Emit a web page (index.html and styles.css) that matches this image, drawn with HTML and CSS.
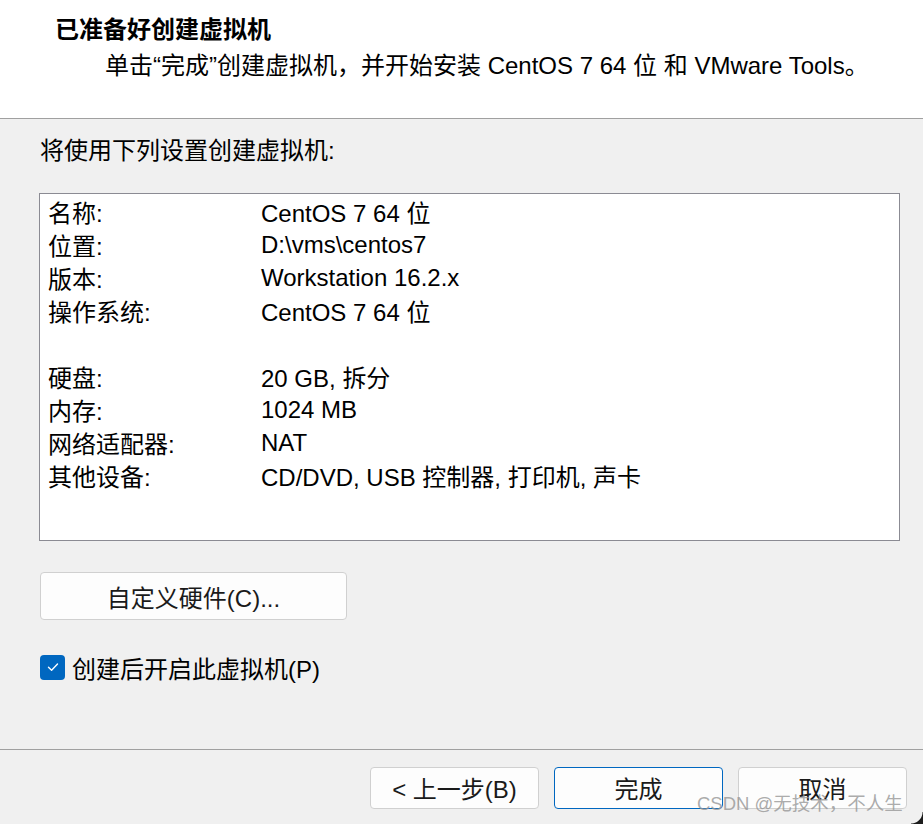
FILE: index.html
```html
<!DOCTYPE html>
<html lang="zh-CN">
<head>
<meta charset="UTF-8" />
<title>新建虚拟机向导</title>
<link rel="stylesheet" href="styles.css">
</head>
<body>
<div class="wizard">
  <div class="head">
    <h1>已准备好创建虚拟机</h1>
    <p>单击“完成”创建虚拟机，并开始安装 CentOS 7 64 位 和 VMware Tools。</p>
  </div>

  <div class="content">
    <div class="intro">将使用下列设置创建虚拟机:</div>

    <div class="summary">
      <div class="row"><span class="key">名称:</span><span>CentOS 7 64 位</span></div>
      <div class="row"><span class="key">位置:</span><span>D:\vms\centos7</span></div>
      <div class="row"><span class="key">版本:</span><span>Workstation 16.2.x</span></div>
      <div class="row"><span class="key">操作系统:</span><span>CentOS 7 64 位</span></div>
      <div class="row"></div>
      <div class="row"><span class="key">硬盘:</span><span>20 GB, 拆分</span></div>
      <div class="row"><span class="key">内存:</span><span>1024 MB</span></div>
      <div class="row"><span class="key">网络适配器:</span><span>NAT</span></div>
      <div class="row"><span class="key">其他设备:</span><span>CD/DVD, USB 控制器, 打印机, 声卡</span></div>
    </div>

    <button class="btn custom" type="button">自定义硬件(C)...</button>

    <label class="check">
      <span class="box">
        <svg width="14" height="14" viewBox="0 0 14 14"><path d="M2.5 7.2 L5.6 10.2 L11.5 4" fill="none" stroke="#fff" stroke-width="1.4" stroke-linecap="round" stroke-linejoin="round"/></svg>
      </span>
      创建后开启此虚拟机(P)
    </label>
  </div>

  <div class="foot">
    <button class="btn" type="button">&lt; 上一步(B)</button>
    <button class="btn primary" type="button">完成</button>
    <button class="btn" type="button">取消</button>
    <span class="mark">CSDN @无技术，不人生</span>
  </div>
  <div class="corner"></div>
</div>
</body>
</html>
```

FILE: styles.css
```css
/* 向导窗口 */
body {
  margin: 0;
  background: #f0f0f0;
  font-family: "Liberation Sans", "Noto Sans CJK SC", sans-serif;
  color: #000;
}
.wizard {
  width: 923px;
  height: 824px;
  display: flex;
  flex-direction: column;
  background: #f0f0f0;
  position: relative;
  overflow: hidden;
}
.head {
  background: #fff;
  height: 119px;
  border-bottom: 1px solid #a0a0a0;
  padding: 14px 0 0 55px;
  box-sizing: border-box;
}
.head h1 {
  margin: 0;
  font-size: 24px;
  font-weight: 700;
  line-height: 32px;
}
.head p {
  margin: 4px 0 0 50px;
  font-size: 24px;
  line-height: 32px;
}
.content {
  flex: 1;
  padding: 16px 0 0 40px;
}
.intro {
  font-size: 24px;
  line-height: 32px;
}
.summary {
  margin: 26px 0 0 -1px;
  width: 861px;
  height: 348px;
  background: #fff;
  border: 1px solid #8b8b93;
  box-sizing: border-box;
  padding: 1px 0 0 8px;
}
.row {
  display: flex;
  height: 33px;
  align-items: center;
  font-size: 24px;
}
.key {
  width: 213px;
}
.btn {
  font-family: inherit;
  font-size: 24px;
  background: #fdfdfd;
  border: 1px solid #d0d0d0;
  border-radius: 4px;
  color: #1a1a1a;
  padding: 0;
  cursor: pointer;
}
.custom {
  display: block;
  margin-top: 31px;
  width: 307px;
  height: 48px;
}
.check {
  display: flex;
  align-items: center;
  margin-top: 33px;
  font-size: 24px;
  height: 28px;
}
.box {
  width: 25px;
  height: 25px;
  border-radius: 4px;
  background: #0067c0;
  display: flex;
  align-items: center;
  justify-content: center;
  margin-right: 7px;
}
.foot {
  height: 75px;
  box-sizing: border-box;
  border-top: 1px solid #a0a0a0;
  display: flex;
  align-items: flex-start;
  padding: 17px 0 0 370px;
  gap: 15px;
  position: relative;
}
.foot .btn {
  width: 169px;
  height: 42px;
  padding-bottom: 2px;
}
.foot .primary {
  border: 1px solid #0067c0;
}
.mark {
  position: absolute;
  left: 697px;
  top: 42px;
  font-size: 18.5px;
  line-height: 24px;
  color: rgba(150, 150, 150, 0.8);
  pointer-events: none;
}
/* 窗口右下角圆角 */
.corner {
  position: absolute;
  right: 0;
  bottom: 0;
  width: 12px;
  height: 12px;
  background: radial-gradient(circle at 0 0, transparent 11px, #1c1c1c 12px);
  pointer-events: none;
}
```
